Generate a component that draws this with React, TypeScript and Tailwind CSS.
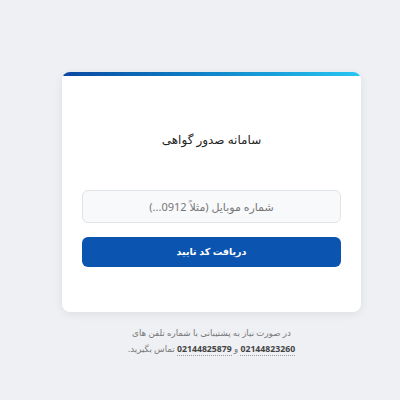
export default function App() {
  return (
    <div
      className="w-[400px] h-[400px] bg-[#eef0f4] overflow-hidden"
      style={{ fontFamily: '"Noto Sans", "DejaVu Sans", sans-serif' }}
    >
      <div className="pt-[72px] ml-[62px] w-[299px]">
        <div dir="rtl" className="bg-white rounded-lg shadow-[0_2px_10px_rgba(0,0,0,0.08)] overflow-hidden">
          <div className="h-[4px] bg-gradient-to-l from-[#27c6f2] to-[#0d47a1]" />
          <div className="px-5 pt-[54px] pb-[45px]">
            <h1 className="text-center text-[12px] text-[#222] leading-5">سامانه صدور گواهی</h1>
            <div className="mt-[40px]">
              <input
                dir="rtl"
                placeholder="شماره موبایل (مثلاً 0912...)"
                className="w-full h-[33px] rounded-md border border-[#e1e4e8] bg-[#f8f9fa] text-center text-[11px] placeholder:text-[#777] outline-none"
              />
            </div>
            <button className="mt-[14px] w-full h-[30px] rounded-md bg-[#0b54b0] text-white text-[9.5px] font-bold">
              دریافت کد تایید
            </button>
          </div>
        </div>
        <div dir="rtl" className="mt-[13px] text-center text-[8.7px] leading-[16px] text-[#777]">
          <div>در صورت نیاز به پشتیبانی با شماره تلفن های</div>
          <div>
            <span className="font-bold text-[#444] border-b border-dotted border-[#999]">02144823260</span> و{" "}
            <span className="font-bold text-[#444] border-b border-dotted border-[#999]">02144825879</span> تماس بگیرید.
          </div>
        </div>
      </div>
    </div>
  );
}
